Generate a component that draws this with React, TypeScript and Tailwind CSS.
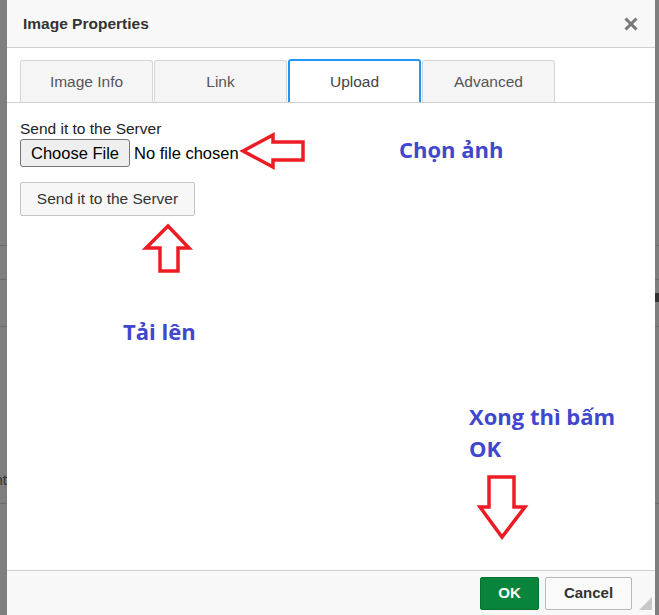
import type { ReactNode } from 'react';

// tabs of the dialog, the active one is Upload
const tabs = ['Image Info', 'Link', 'Upload', 'Advanced'];
const activeTab = 'Upload';

const ui = { fontFamily: '"Liberation Sans", Arial, sans-serif' };
const note = { fontFamily: '"Open Sans", "Noto Sans", sans-serif' };

// red hand-drawn arrow, points given in page coords
const Arrow = ({ left, top, w, h, points }: { left: number; top: number; w: number; h: number; points: string }) => (
  <svg
    className="absolute"
    style={{ left, top }}
    width={w}
    height={h}
    viewBox={`${left} ${top} ${w} ${h}`}
  >
    <polygon points={points} fill="none" stroke="#ed1c24" strokeWidth={3.5} strokeLinejoin="miter" />
  </svg>
);

const Note = ({ className, children }: { className: string; children: ReactNode }) => (
  <div className={`absolute text-[22px] font-bold leading-[32px] text-[#3f48cc] ${className}`} style={note}>
    {children}
  </div>
);

// gray page behind the modal, with the faint row lines of the page underneath
const Backdrop = ({ width, withText, withMark }: { width: string; withText?: boolean; withMark?: boolean }) => (
  <div className={`${width} flex flex-col bg-[#7f7f7f] overflow-hidden`}>
    <div className="h-[246px] border-b border-[#6c6c6c]" />
    <div className="h-[34px] border-b border-[#6c6c6c]" />
    <div className="h-[47px] border-b border-[#6c6c6c] flex flex-col">
      {withMark && <div className="mt-[13px] h-[9px] bg-[#333]" />}
    </div>
    <div className="h-[177px] border-b border-[#6c6c6c] flex items-end justify-end pb-[16px]">
      {withText && (
        <span className="text-[15px] leading-none text-[#333] whitespace-nowrap" style={ui}>
          nt
        </span>
      )}
    </div>
  </div>
);

export default function App() {
  return (
    <div className="relative flex w-[659px] h-[615px] overflow-hidden bg-white" style={ui}>
      <Backdrop width="w-[7px]" withText />

      <div className="flex-1 flex flex-col bg-white">
        {/* header */}
        <div className="h-[48px] flex items-center justify-between pl-[16px] pr-[17px] bg-[#f8f8f8] border-b border-[#d1d1d1]">
          <span className="text-[15.5px] font-bold text-[#333]">Image Properties</span>
          <svg width="14" height="14" viewBox="0 0 14 14">
            <path d="M1.5 1.5 L12.5 12.5 M12.5 1.5 L1.5 12.5" stroke="#777" strokeWidth={3} />
          </svg>
        </div>

        {/* tab bar */}
        <div className="mt-[11px] flex gap-[1px] pl-[13px] border-b border-[#d1d1d1]">
          {tabs.map((t) =>
            t === activeTab ? (
              <div
                key={t}
                className="w-[133px] h-[43px] -mb-[1px] flex items-center justify-center bg-white border-2 border-b-0 border-[#2196f3] rounded-t-[3px] text-[15.5px] text-[#444]"
              >
                {t}
              </div>
            ) : (
              <div
                key={t}
                className="w-[133px] h-[42px] mt-[1px] flex items-center justify-center bg-[#f5f5f5] border border-b-0 border-[#d6d6d6] rounded-t-[3px] text-[15.5px] text-[#555]"
              >
                {t}
              </div>
            )
          )}
        </div>

        {/* upload panel */}
        <div className="flex-1 flex flex-col items-start pl-[13px] pt-[17px]">
          <span className="text-[15.5px] leading-[18px] text-[#222]">Send it to the Server</span>
          <div className="mt-[1px] flex items-center gap-[4px]">
            <div className="h-[28px] px-[10px] flex items-center bg-[#efefef] border border-[#767676] rounded-[3px] text-[16.5px] text-black">
              Choose File
            </div>
            <span className="text-[16.5px] text-black">No file chosen</span>
          </div>
          <div className="mt-[15px] h-[34px] w-[175px] flex items-center justify-center bg-[#f7f7f7] border border-[#c4c4c4] rounded-[2px] text-[15.5px] text-[#333]">
            Send it to the Server
          </div>
        </div>

        {/* footer */}
        <div className="relative h-[45px] flex items-start justify-end gap-[6px] pt-[6px] pr-[23px] bg-[#f8f8f8] border-t border-[#d1d1d1]">
          <div className="h-[33px] w-[59px] flex items-center justify-center bg-[#09843d] border border-[#07722f] rounded-[2px] text-[15px] font-bold text-white">
            OK
          </div>
          <div className="h-[33px] w-[87px] flex items-center justify-center bg-[#fafafa] border border-[#b9b9b9] rounded-[2px] text-[15px] font-bold text-[#333]">
            Cancel
          </div>
          <svg className="absolute right-[3px] bottom-[5px]" width="13" height="13" viewBox="0 0 13 13">
            <polygon points="13,0 13,13 0,13" fill="#c9c9c9" />
          </svg>
        </div>
      </div>

      <Backdrop width="w-[4px]" withMark />

      {/* annotations drawn over the screenshot */}
      <Arrow left={238} top={130} w={70} h={42} points="243,151 273,135 273,142 303,142 303,160 273,160 273,167" />
      <Arrow left={141} top={221} w={53} h={54} points="168,226 189,248 178,248 178,271 160,271 160,248 146,248" />
      <Arrow left={475} top={472} w={55} h={70} points="489,477 514,477 514,507 525,507 502,537 480,507 489,507" />
      <Note className="left-[399px] top-[133px]">Chọn ảnh</Note>
      <Note className="left-[123px] top-[315px]">Tải lên</Note>
      <Note className="left-[469px] top-[400px]">
        Xong thì bấm
        <br />
        OK
      </Note>
    </div>
  );
}
